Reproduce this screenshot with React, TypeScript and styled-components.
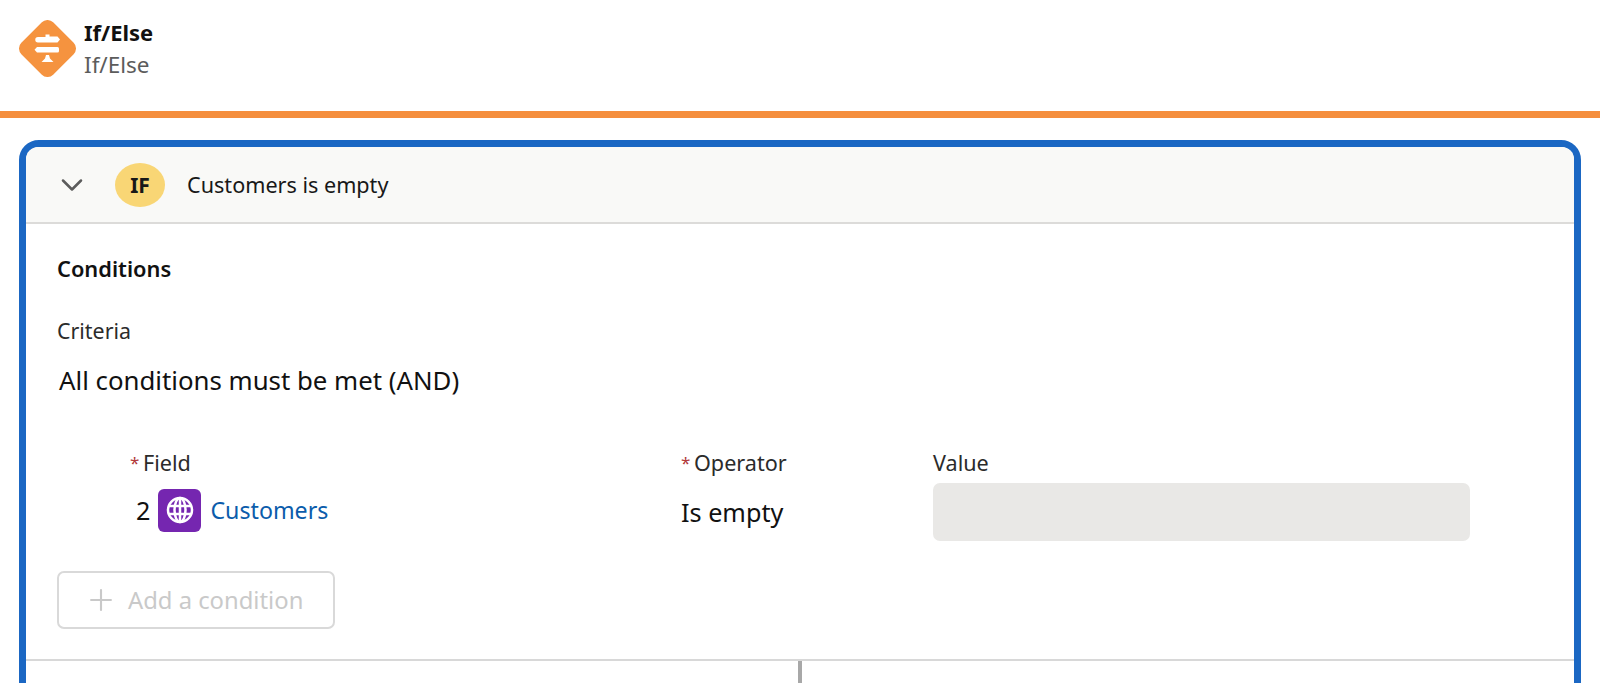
import React from "react";
import styled, { createGlobalStyle } from "styled-components";
import { ChevronDown, Plus } from "lucide-react";

const GlobalStyle = createGlobalStyle`
  html, body {
    margin: 0;
    height: 683px;
    overflow: hidden;
    background: #fff;
    font-family: "Noto Sans", "Open Sans", sans-serif;
    color: #181818;
  }
`;

const PageHeader = styled.header`
  height: 111px;
  padding: 20px 19px 0;
  box-sizing: border-box;
  display: flex;
  gap: 8px;
`;

const HeaderText = styled.div`
  display: flex;
  flex-direction: column;
`;

const Title = styled.div`
  font-size: 22px;
  line-height: 25px;
  font-weight: 700;
  color: #111;
`;

const Subtitle = styled.div`
  font-size: 22.5px;
  line-height: 27px;
  margin-top: 6px;
  color: #5c5c5c;
`;

const AccentLine = styled.div`
  height: 7px;
  background: #f58e3d;
`;

const Card = styled.section`
  margin: 22px 19px 0;
  height: 700px;
  border: 7px solid #1b67c3;
  border-radius: 20px;
  background: #fff;
`;

const CardHead = styled.div`
  height: 77px;
  box-sizing: border-box;
  display: flex;
  align-items: center;
  padding-left: 28px;
  background: #f9f9f7;
  border-bottom: 2px solid #dcdbd9;
  border-radius: 12px 12px 0 0;
  font-size: 21.6px;
  color: #181818;
`;

const Chevron = styled(ChevronDown)`
  width: 36px;
  height: 36px;
  color: #5c5c5c;
  stroke-width: 1.7;
`;

const Badge = styled.span`
  margin-left: 25px;
  margin-right: 22px;
  width: 50px;
  height: 44px;
  border-radius: 25px / 22px;
  background: #f9d675;
  display: flex;
  align-items: center;
  justify-content: center;
  font-weight: 700;
  font-size: 21px;
  color: #181818;
`;

const Body = styled.div`
  padding: 0 31px;
  height: 437px;
  box-sizing: border-box;
  border-bottom: 2px solid #d8d8d8;
`;

const SectionTitle = styled.h2`
  margin: 0;
  padding-top: 31px;
  font-size: 21.8px;
  line-height: 27px;
  font-weight: 600;
  color: #111;
`;

const SmallLabel = styled.div`
  margin-top: 36px;
  font-size: 21.4px;
  line-height: 26px;
  color: #2b2b2b;
`;

const CriteriaValue = styled.div`
  margin-top: 20px;
  margin-left: 2px;
  font-size: 25.8px;
  line-height: 33px;
  color: #111;
`;

const ConditionRow = styled.div`
  display: grid;
  grid-template-columns: 551px 252px 537px;
  margin-top: 53px;
  margin-left: 73px;
`;

const Column = styled.div`
  display: flex;
  flex-direction: column;
`;

const FieldLabel = styled.label`
  height: 33px;
  font-size: 21.6px;
  line-height: 26px;
  color: #2b2b2b;
  display: flex;
  gap: 5px;
`;

const Required = styled.span`
  color: #b23a3a;
  width: 8px;
  font-size: 17px;
`;

const FieldValue = styled.div`
  height: 54px;
  display: flex;
  align-items: center;
  font-size: 25.2px;
  color: #111;
`;

const OperatorValue = styled(FieldValue)`
  padding-top: 2px;
`;

const ResourceNumber = styled.span<{ $inset: number }>`
  margin-left: ${(p) => p.$inset}px;
  margin-right: 8px;
`;

const ResourceIcon = styled.span`
  width: 43px;
  height: 43px;
  border-radius: 6px;
  background: #7526b0;
  display: flex;
  align-items: center;
  justify-content: center;
  margin-right: 9px;
`;

const ResourceLink = styled.a`
  color: #0b5cab;
  font-size: 23.2px;
`;

const DisabledInput = styled.div`
  height: 58px;
  border-radius: 7px;
  background: #e9e8e6;
`;

const AddButton = styled.button`
  margin-top: 30px;
  width: 278px;
  height: 58px;
  padding: 0 0 0 25px;
  display: flex;
  align-items: center;
  gap: 10px;
  background: #fff;
  border: 2px solid #d9d9d9;
  border-radius: 7px;
  font: inherit;
  font-size: 23.8px;
  color: #c9c9c9;
`;

const AddIcon = styled(Plus)`
  width: 34px;
  height: 34px;
  color: #c9c9c9;
  stroke-width: 1.5;
`;

const Lower = styled.div`
  display: flex;
  justify-content: center;
`;

const Splitter = styled.div`
  width: 4px;
  height: 30px;
  background: #a8a8a8;
`;

function DecisionIcon() {
  return (
    <svg width="57" height="57" viewBox="0 0 57 57">
      <rect x="6" y="6" width="45" height="45" rx="8" fill="#f5933f" transform="rotate(45 28.5 28.5)" />
      <path d="M26.5 14.5h4v2h8l2.5 3-2.500 3H19a2.500 2.500 0 0 1 0-5.500h7.500z" fill="#fff" />
      <path d="M18 27h20.500a1.500 1.500 0 0 1 1.500 1.500v2.500a1.500 1.500 0 0 1-1.500 1.500H18l-2.500-2.700z" fill="#fff" />
      <path d="M27 35h3l1 3.500 3.500 3.500H22.500l3.500-3.500z" fill="#fff" />
    </svg>
  );
}

function GlobeIcon() {
  return (
    <svg width="28" height="28" viewBox="0 0 28 28" fill="none" stroke="#fff" strokeWidth="2.500">
      <circle cx="14" cy="14" r="12" />
      <ellipse cx="14" cy="14" rx="5.500" ry="12" />
      <path d="M14 2v24M3 10h22M3 18h22" />
    </svg>
  );
}

export default function App() {
  return (
    <>
      <GlobalStyle />
      <PageHeader>
        <DecisionIcon />
        <HeaderText>
          <Title>If/Else</Title>
          <Subtitle>If/Else</Subtitle>
        </HeaderText>
      </PageHeader>
      <AccentLine />
      <Card>
        <CardHead>
          <Chevron />
          <Badge>IF</Badge>
          Customers is empty
        </CardHead>
        <Body>
          <SectionTitle>Conditions</SectionTitle>
          <SmallLabel>Criteria</SmallLabel>
          <CriteriaValue>All conditions must be met (AND)</CriteriaValue>
          <ConditionRow>
            <Column>
              <FieldLabel>
                <Required>*</Required>Field
              </FieldLabel>
              <FieldValue>
                <ResourceNumber $inset={6}>2</ResourceNumber>
                <ResourceIcon>
                  <GlobeIcon />
                </ResourceIcon>
                <ResourceLink>Customers</ResourceLink>
              </FieldValue>
            </Column>
            <Column>
              <FieldLabel>
                <Required>*</Required>Operator
              </FieldLabel>
              <OperatorValue>Is empty</OperatorValue>
            </Column>
            <Column>
              <FieldLabel>Value</FieldLabel>
              <DisabledInput />
            </Column>
          </ConditionRow>
          <AddButton disabled>
            <AddIcon />
            Add a condition
          </AddButton>
        </Body>
        <Lower>
          <Splitter />
        </Lower>
      </Card>
    </>
  );
}
